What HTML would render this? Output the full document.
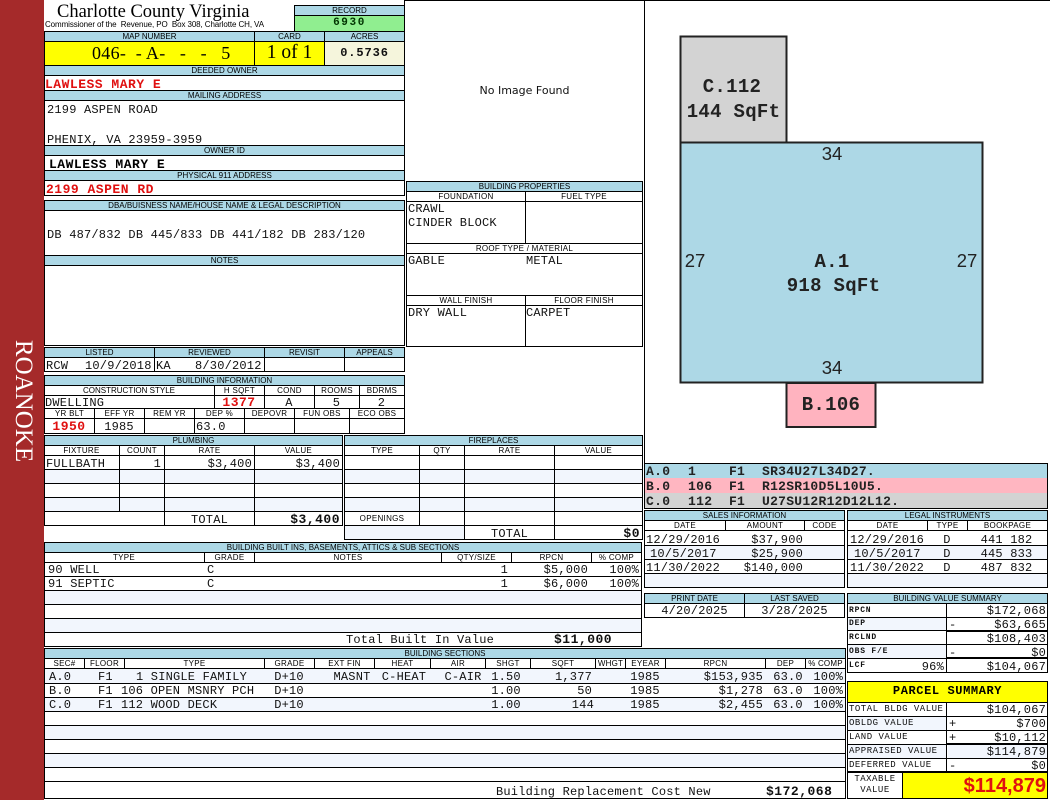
<!DOCTYPE html>
<html><head><meta charset="utf-8"><style>
html,body{margin:0;padding:0;background:#fff}
#p{position:relative;width:1050px;height:800px;overflow:hidden;background:#fff;font-family:"Liberation Mono",monospace;font-size:12px;color:#111}
#p div{position:absolute;box-sizing:border-box;white-space:pre}
.h{background:#add8e6;border:1px solid #000;height:11px;font:8px/9px "Liberation Sans",sans-serif;letter-spacing:0;text-align:center;color:#000}
.l{border:1px solid #000;height:11px;background:#fff;font:8px/11px "Liberation Sans",sans-serif;letter-spacing:.3px;text-align:center;color:#000}
.f{border:1px solid #000;background:#fff}
.s{background:#f2f6fd}
.hl{height:1px;background:#000}
.vl{width:1px;background:#000}
.m{height:14px;line-height:16px;letter-spacing:.2px}
.r{text-align:right}
.c{text-align:center}
.b{font-weight:bold;font-size:13px;letter-spacing:.5px}
.red{color:#e01010}
.t{font-size:9px;letter-spacing:.5px;height:14px;line-height:14px;color:#111}
</style></head><body><div id="p">

<div style="left:0;top:0;width:44px;height:800px;background:#a52a2a"></div>
<div style="left:-39px;top:388px;width:124px;height:26px;line-height:26px;transform:rotate(90deg);color:#fff;font:25px/26px 'Liberation Serif',serif;text-align:center">ROANOKE</div>

<!-- header -->
<div style="left:57px;top:2px;font:18.5px/20px 'Liberation Serif',serif;color:#000">Charlotte County Virginia</div>
<div style="left:45px;top:20px;font:8px/10px 'Liberation Sans',sans-serif;letter-spacing:-.1px;color:#000">Commissioner of the  Revenue, PO  Box 308, Charlotte CH, VA</div>
<div class="h" style="left:294px;top:5px;width:111px">RECORD</div>
<div class="f" style="left:294px;top:15px;width:111px;height:17px;background:#90ee90;font-weight:bold;font-size:11px;letter-spacing:1.6px;line-height:15px;text-align:center;color:#030">6930</div>

<div class="h" style="left:44px;top:31px;width:211px">MAP NUMBER</div>
<div class="h" style="left:254px;top:31px;width:71px">CARD</div>
<div class="h" style="left:324px;top:31px;width:81px">ACRES</div>
<div class="f" style="left:44px;top:41px;width:211px;height:25px;background:#ff0;font:18px/22px 'Liberation Serif',serif;letter-spacing:.3px;color:#000;padding-left:47px">046-  - A-   -   -   5</div>
<div class="f" style="left:254px;top:41px;width:71px;height:25px;background:#ff0;font:19.5px/22px 'Liberation Serif',serif;color:#000;text-align:center">1 of 1</div>
<div class="f" style="left:324px;top:41px;width:81px;height:25px;background:#f5f5dc;font-weight:bold;font-size:12px;letter-spacing:.9px;line-height:22px;text-align:center;color:#111">0.5736</div>

<div class="h" style="left:44px;top:65px;width:361px">DEEDED OWNER</div>
<div class="f" style="left:44px;top:75px;width:361px;height:16px"></div>
<div class="m b red" style="left:45px;top:77px">LAWLESS MARY E</div>
<div class="h" style="left:44px;top:90px;width:361px">MAILING ADDRESS</div>
<div class="f" style="left:44px;top:100px;width:361px;height:46px"></div>
<div class="m" style="left:47px;top:102px">2199 ASPEN ROAD</div>
<div class="m" style="left:47px;top:132px">PHENIX, VA 23959-3959</div>
<div class="h" style="left:44px;top:145px;width:361px">OWNER ID</div>
<div class="f" style="left:44px;top:155px;width:361px;height:16px"></div>
<div class="m b" style="left:49px;top:157px;color:#000">LAWLESS MARY E</div>
<div class="h" style="left:44px;top:170px;width:361px">PHYSICAL 911 ADDRESS</div>
<div class="f" style="left:44px;top:180px;width:361px;height:16px"></div>
<div class="m b red" style="left:46px;top:182px">2199 ASPEN RD</div>

<div class="h" style="left:44px;top:200px;width:361px">DBA/BUISNESS NAME/HOUSE NAME &amp; LEGAL DESCRIPTION</div>
<div class="f" style="left:44px;top:210px;width:361px;height:46px"></div>
<div class="m" style="left:47px;top:227px">DB 487/832 DB 445/833 DB 441/182 DB 283/120</div>
<div class="h" style="left:44px;top:255px;width:361px">NOTES</div>
<div class="f" style="left:44px;top:265px;width:361px;height:81px"></div>

<!-- listed -->
<div class="h" style="left:44px;top:347px;width:111px">LISTED</div>
<div class="h" style="left:154px;top:347px;width:111px">REVIEWED</div>
<div class="h" style="left:264px;top:347px;width:81px">REVISIT</div>
<div class="h" style="left:344px;top:347px;width:61px">APPEALS</div>
<div class="f" style="left:44px;top:357px;width:111px;height:15px"></div>
<div class="f" style="left:154px;top:357px;width:111px;height:15px"></div>
<div class="f" style="left:264px;top:357px;width:81px;height:15px"></div>
<div class="f" style="left:344px;top:357px;width:61px;height:15px"></div>
<div class="m" style="left:46px;top:358px">RCW</div>
<div class="m" style="left:85px;top:358px">10/9/2018</div>
<div class="m" style="left:156px;top:358px">KA</div>
<div class="m" style="left:195px;top:358px">8/30/2012</div>

<!-- building info -->
<div class="h" style="left:44px;top:375px;width:361px">BUILDING INFORMATION</div>
<div class="f" style="left:44px;top:385px;width:361px;height:49px"></div>
<div class="hl" style="left:44px;top:395px;width:361px"></div>
<div class="hl" style="left:44px;top:408px;width:361px"></div>
<div class="hl" style="left:44px;top:418px;width:361px"></div>
<div class="vl" style="left:214px;top:385px;height:23px"></div>
<div class="vl" style="left:264px;top:385px;height:23px"></div>
<div class="vl" style="left:314px;top:385px;height:23px"></div>
<div class="vl" style="left:359px;top:385px;height:23px"></div>
<div class="vl" style="left:94px;top:408px;height:26px"></div>
<div class="vl" style="left:144px;top:408px;height:26px"></div>
<div class="vl" style="left:194px;top:408px;height:26px"></div>
<div class="vl" style="left:244px;top:408px;height:26px"></div>
<div class="vl" style="left:294px;top:408px;height:26px"></div>
<div class="vl" style="left:349px;top:408px;height:26px"></div>
<div class="l" style="left:44px;top:385px;width:170px;border:0;letter-spacing:0;background:none">CONSTRUCTION STYLE</div>
<div class="l" style="left:215px;top:385px;width:49px;border:0;background:none">H SQFT</div>
<div class="l" style="left:265px;top:385px;width:49px;border:0;background:none">COND</div>
<div class="l" style="left:315px;top:385px;width:44px;border:0;background:none">ROOMS</div>
<div class="l" style="left:360px;top:385px;width:44px;border:0;background:none">BDRMS</div>
<div class="l" style="left:45px;top:408px;width:49px;border:0;background:none">YR BLT</div>
<div class="l" style="left:95px;top:408px;width:49px;border:0;background:none">EFF YR</div>
<div class="l" style="left:145px;top:408px;width:49px;border:0;background:none">REM YR</div>
<div class="l" style="left:195px;top:408px;width:49px;border:0;background:none">DEP %</div>
<div class="l" style="left:245px;top:408px;width:49px;border:0;background:none">DEPOVR</div>
<div class="l" style="left:295px;top:408px;width:54px;border:0;background:none">FUN OBS</div>
<div class="l" style="left:350px;top:408px;width:54px;border:0;background:none">ECO OBS</div>
<div class="m" style="left:45px;top:395px">DWELLING</div>
<div class="m b red c" style="left:214px;top:395px;width:50px">1377</div>
<div class="m c" style="left:264px;top:395px;width:50px">A</div>
<div class="m c" style="left:314px;top:395px;width:45px">5</div>
<div class="m c" style="left:359px;top:395px;width:45px">2</div>
<div class="m b red c" style="left:44px;top:419px;width:50px">1950</div>
<div class="m c" style="left:94px;top:419px;width:50px">1985</div>
<div class="m" style="left:196px;top:419px">63.0</div>

<!-- plumbing -->
<div class="h" style="left:44px;top:435px;width:299px">PLUMBING</div>
<div class="f" style="left:44px;top:445px;width:299px;height:81px"></div>
<div class="s" style="left:45px;top:470px;width:297px;height:13px"></div>
<div class="s" style="left:45px;top:498px;width:297px;height:13px"></div>
<div class="hl" style="left:44px;top:455px;width:299px"></div>
<div class="hl" style="left:44px;top:469px;width:299px"></div>
<div class="hl" style="left:44px;top:483px;width:299px"></div>
<div class="hl" style="left:44px;top:497px;width:299px"></div>
<div class="hl" style="left:44px;top:511px;width:299px"></div>
<div class="vl" style="left:119px;top:445px;height:66px"></div>
<div class="vl" style="left:164px;top:445px;height:81px"></div>
<div class="vl" style="left:254px;top:445px;height:81px"></div>
<div class="l" style="left:44px;top:445px;width:75px;border:0;background:none">FIXTURE</div>
<div class="l" style="left:120px;top:445px;width:44px;border:0;background:none">COUNT</div>
<div class="l" style="left:165px;top:445px;width:89px;border:0;background:none">RATE</div>
<div class="l" style="left:255px;top:445px;width:87px;border:0;background:none">VALUE</div>
<div class="m" style="left:46px;top:456px">FULLBATH</div>
<div class="m r" style="left:120px;top:456px;width:41px">1</div>
<div class="m r" style="left:165px;top:456px;width:87px">$3,400</div>
<div class="m r" style="left:255px;top:456px;width:85px">$3,400</div>
<div class="m c" style="left:165px;top:512px;width:89px">TOTAL</div>
<div class="m b r" style="left:255px;top:512px;width:85px">$3,400</div>

<!-- fireplaces -->
<div class="h" style="left:344px;top:435px;width:299px">FIREPLACES</div>
<div class="f" style="left:344px;top:445px;width:299px;height:95px"></div>
<div class="s" style="left:345px;top:470px;width:297px;height:13px"></div>
<div class="s" style="left:345px;top:498px;width:297px;height:13px"></div>
<div class="s" style="left:345px;top:526px;width:119px;height:13px"></div>
<div class="hl" style="left:344px;top:455px;width:299px"></div>
<div class="hl" style="left:344px;top:469px;width:299px"></div>
<div class="hl" style="left:344px;top:483px;width:299px"></div>
<div class="hl" style="left:344px;top:497px;width:299px"></div>
<div class="hl" style="left:344px;top:511px;width:299px"></div>
<div class="hl" style="left:344px;top:525px;width:299px"></div>
<div class="vl" style="left:419px;top:445px;height:80px"></div>
<div class="vl" style="left:464px;top:445px;height:95px"></div>
<div class="vl" style="left:554px;top:445px;height:95px"></div>
<div class="l" style="left:345px;top:445px;width:74px;border:0;background:none">TYPE</div>
<div class="l" style="left:420px;top:445px;width:44px;border:0;background:none">QTY</div>
<div class="l" style="left:465px;top:445px;width:89px;border:0;background:none">RATE</div>
<div class="l" style="left:555px;top:445px;width:87px;border:0;background:none">VALUE</div>
<div class="l" style="left:345px;top:513px;width:74px;border:0;background:none">OPENINGS</div>
<div class="m c" style="left:465px;top:526px;width:89px">TOTAL</div>
<div class="m b r" style="left:555px;top:526px;width:85px">$0</div>

<!-- built ins -->
<div class="h" style="left:44px;top:542px;width:598px">BUILDING BUILT INS, BASEMENTS, ATTICS &amp; SUB SECTIONS</div>
<div class="f" style="left:44px;top:552px;width:598px;height:95px"></div>
<div class="s" style="left:45px;top:591px;width:596px;height:13px"></div>
<div class="s" style="left:45px;top:619px;width:596px;height:13px"></div>
<div class="hl" style="left:44px;top:562px;width:598px"></div>
<div class="hl" style="left:44px;top:576px;width:598px"></div>
<div class="hl" style="left:44px;top:590px;width:598px"></div>
<div class="hl" style="left:44px;top:604px;width:598px"></div>
<div class="hl" style="left:44px;top:618px;width:598px"></div>
<div class="hl" style="left:44px;top:632px;width:598px"></div>
<div class="vl" style="left:204px;top:552px;height:10px"></div>
<div class="vl" style="left:254px;top:552px;height:10px"></div>
<div class="vl" style="left:441px;top:552px;height:10px"></div>
<div class="vl" style="left:511px;top:552px;height:10px"></div>
<div class="vl" style="left:591px;top:552px;height:10px"></div>
<div class="l" style="left:44px;top:552px;width:160px;border:0;background:none">TYPE</div>
<div class="l" style="left:205px;top:552px;width:49px;border:0;background:none">GRADE</div>
<div class="l" style="left:255px;top:552px;width:186px;border:0;background:none">NOTES</div>
<div class="l" style="left:442px;top:552px;width:69px;border:0;background:none">QTY/SIZE</div>
<div class="l" style="left:512px;top:552px;width:79px;border:0;background:none">RPCN</div>
<div class="l" style="left:592px;top:552px;width:49px;border:0;background:none">% COMP</div>
<div class="m" style="left:48px;top:562px">90 WELL</div>
<div class="m" style="left:207px;top:562px">C</div>
<div class="m r" style="left:442px;top:562px;width:66px">1</div>
<div class="m r" style="left:512px;top:562px;width:76px">$5,000</div>
<div class="m r" style="left:592px;top:562px;width:47px">100%</div>
<div class="m" style="left:48px;top:576px">91 SEPTIC</div>
<div class="m" style="left:207px;top:576px">C</div>
<div class="m r" style="left:442px;top:576px;width:66px">1</div>
<div class="m r" style="left:512px;top:576px;width:76px">$6,000</div>
<div class="m r" style="left:592px;top:576px;width:47px">100%</div>
<div class="m" style="left:346px;top:632px">Total Built In Value</div>
<div class="m b" style="left:554px;top:632px">$11,000</div>

<!-- building sections -->
<div class="h" style="left:44px;top:648px;width:802px">BUILDING SECTIONS</div>
<div class="f" style="left:44px;top:658px;width:802px;height:141px"></div>
<div class="s" style="left:45px;top:669px;width:800px;height:14px"></div>
<div class="s" style="left:45px;top:698px;width:800px;height:13px"></div>
<div class="s" style="left:45px;top:726px;width:800px;height:13px"></div>
<div class="s" style="left:45px;top:754px;width:800px;height:13px"></div>
<div class="hl" style="left:44px;top:668px;width:802px"></div>
<div class="hl" style="left:44px;top:683px;width:802px"></div>
<div class="hl" style="left:44px;top:697px;width:802px"></div>
<div class="hl" style="left:44px;top:711px;width:802px"></div>
<div class="hl" style="left:44px;top:725px;width:802px"></div>
<div class="hl" style="left:44px;top:739px;width:802px"></div>
<div class="hl" style="left:44px;top:753px;width:802px"></div>
<div class="hl" style="left:44px;top:767px;width:802px"></div>
<div class="hl" style="left:44px;top:781px;width:802px"></div>
<div class="vl" style="left:84px;top:658px;height:10px"></div>
<div class="vl" style="left:124px;top:658px;height:10px"></div>
<div class="vl" style="left:264px;top:658px;height:10px"></div>
<div class="vl" style="left:314px;top:658px;height:10px"></div>
<div class="vl" style="left:374px;top:658px;height:10px"></div>
<div class="vl" style="left:430px;top:658px;height:10px"></div>
<div class="vl" style="left:485px;top:658px;height:10px"></div>
<div class="vl" style="left:530px;top:658px;height:10px"></div>
<div class="vl" style="left:595px;top:658px;height:10px"></div>
<div class="vl" style="left:625px;top:658px;height:10px"></div>
<div class="vl" style="left:665px;top:658px;height:10px"></div>
<div class="vl" style="left:765px;top:658px;height:10px"></div>
<div class="vl" style="left:805px;top:658px;height:10px"></div>
<div class="l" style="left:45px;top:658px;width:39px;border:0;background:none">SEC#</div>
<div class="l" style="left:85px;top:658px;width:39px;border:0;background:none">FLOOR</div>
<div class="l" style="left:125px;top:658px;width:139px;border:0;background:none">TYPE</div>
<div class="l" style="left:265px;top:658px;width:49px;border:0;background:none">GRADE</div>
<div class="l" style="left:315px;top:658px;width:59px;border:0;background:none">EXT FIN</div>
<div class="l" style="left:375px;top:658px;width:55px;border:0;background:none">HEAT</div>
<div class="l" style="left:431px;top:658px;width:54px;border:0;background:none">AIR</div>
<div class="l" style="left:486px;top:658px;width:44px;border:0;background:none">SHGT</div>
<div class="l" style="left:531px;top:658px;width:64px;border:0;background:none">SQFT</div>
<div class="l" style="left:596px;top:658px;width:29px;border:0;background:none;letter-spacing:.2px">WHGT</div>
<div class="l" style="left:626px;top:658px;width:39px;border:0;background:none">EYEAR</div>
<div class="l" style="left:666px;top:658px;width:99px;border:0;background:none">RPCN</div>
<div class="l" style="left:766px;top:658px;width:39px;border:0;background:none">DEP</div>
<div class="l" style="left:806px;top:658px;width:39px;border:0;background:none;letter-spacing:.2px">% COMP</div>

<div class="m" style="left:49px;top:669px">A.0</div><div class="m" style="left:98px;top:669px">F1</div><div class="m" style="left:136px;top:669px">1 SINGLE FAMILY</div><div class="m c" style="left:264px;top:669px;width:50px">D+10</div><div class="m c" style="left:322px;top:669px;width:60px">MASNT</div><div class="m c" style="left:374px;top:669px;width:60px">C-HEAT</div><div class="m c" style="left:433px;top:669px;width:60px">C-AIR</div><div class="m c" style="left:486px;top:669px;width:40px">1.50</div><div class="m r" style="left:531px;top:669px;width:61px">1,377</div><div class="m c" style="left:625px;top:669px;width:40px">1985</div><div class="m r" style="left:666px;top:669px;width:97px">$153,935</div><div class="m c" style="left:768px;top:669px;width:40px">63.0</div><div class="m r" style="left:806px;top:669px;width:37px">100%</div>
<div class="m" style="left:49px;top:683px">B.0</div><div class="m" style="left:98px;top:683px">F1</div><div class="m" style="left:121px;top:683px">106 OPEN MSNRY PCH</div><div class="m c" style="left:264px;top:683px;width:50px">D+10</div><div class="m c" style="left:486px;top:683px;width:40px">1.00</div><div class="m r" style="left:531px;top:683px;width:61px">50</div><div class="m c" style="left:625px;top:683px;width:40px">1985</div><div class="m r" style="left:666px;top:683px;width:97px">$1,278</div><div class="m c" style="left:768px;top:683px;width:40px">63.0</div><div class="m r" style="left:806px;top:683px;width:37px">100%</div>
<div class="m" style="left:49px;top:697px">C.0</div><div class="m" style="left:98px;top:697px">F1</div><div class="m" style="left:121px;top:697px">112 WOOD DECK</div><div class="m c" style="left:264px;top:697px;width:50px">D+10</div><div class="m c" style="left:486px;top:697px;width:40px">1.00</div><div class="m r" style="left:531px;top:697px;width:63px">144</div><div class="m c" style="left:625px;top:697px;width:40px">1985</div><div class="m r" style="left:666px;top:697px;width:97px">$2,455</div><div class="m c" style="left:768px;top:697px;width:40px">63.0</div><div class="m r" style="left:806px;top:697px;width:37px">100%</div>
<div class="m" style="left:496px;top:784px">Building Replacement Cost New</div>
<div class="m b" style="left:766px;top:784px">$172,068</div>

<!-- image box -->
<div class="vl" style="left:404px;top:0;height:180px"></div>
<div class="vl" style="left:644px;top:0;height:463px"></div>
<div class="hl" style="left:404px;top:0;width:646px"></div>
<div style="left:405px;top:83px;width:239px;text-align:center;font:11px/15px 'DejaVu Sans',sans-serif;color:#111">No Image Found</div>

<!-- building properties -->
<div class="h" style="left:406px;top:181px;width:237px">BUILDING PROPERTIES</div>
<div class="f" style="left:406px;top:191px;width:237px;height:156px"></div>
<div class="hl" style="left:406px;top:201px;width:237px"></div>
<div class="hl" style="left:406px;top:243px;width:237px"></div>
<div class="hl" style="left:406px;top:253px;width:237px"></div>
<div class="hl" style="left:406px;top:295px;width:237px"></div>
<div class="hl" style="left:406px;top:305px;width:237px"></div>
<div class="vl" style="left:525px;top:191px;height:52px"></div>
<div class="vl" style="left:525px;top:295px;height:52px"></div>
<div class="l" style="left:407px;top:191px;width:118px;border:0;background:none">FOUNDATION</div>
<div class="l" style="left:526px;top:191px;width:116px;border:0;background:none">FUEL TYPE</div>
<div class="l" style="left:407px;top:243px;width:235px;border:0;background:none;letter-spacing:.25px">ROOF TYPE / MATERIAL</div>
<div class="l" style="left:407px;top:295px;width:118px;border:0;background:none">WALL FINISH</div>
<div class="l" style="left:526px;top:295px;width:116px;border:0;background:none">FLOOR FINISH</div>
<div class="m" style="left:408px;top:201px">CRAWL</div>
<div class="m" style="left:408px;top:215px">CINDER BLOCK</div>
<div class="m" style="left:408px;top:253px">GABLE</div>
<div class="m" style="left:526px;top:253px">METAL</div>
<div class="m" style="left:408px;top:305px">DRY WALL</div>
<div class="m" style="left:526px;top:305px">CARPET</div>

<!-- sketch -->
<svg style="position:absolute;left:645px;top:1px" width="405" height="462" viewBox="645 1 405 462">
<polygon points="680.5,36.5 786.5,36.5 786.5,142.5 680.5,142.5" fill="#d3d3d3" stroke="#222" stroke-width="2"/>
<polygon points="786.5,383 875.5,383 875.5,427 786.5,427" fill="#ffb3bf" stroke="#222" stroke-width="2"/>
<polygon points="680.5,142.5 982.5,142.5 982.5,382.5 680.5,382.5" fill="#add8e6" stroke="#222" stroke-width="2"/>
<g font-family="Liberation Mono, monospace" font-weight="bold" font-size="19" letter-spacing=".3" fill="#222" text-anchor="middle">
<text x="732" y="92">C.112</text>
<text x="733.5" y="117">144 SqFt</text>
<text x="832" y="267">A.1</text>
<text x="833.5" y="291">918 SqFt</text>
<text x="831" y="410">B.106</text>
</g>
<g font-family="Liberation Sans, sans-serif" font-size="18.5" fill="#222" text-anchor="middle">
<text x="832" y="160">34</text>
<text x="832" y="374">34</text>
<text x="695" y="267">27</text>
<text x="967" y="267">27</text>
</g>
</svg>

<!-- sketch legend -->
<div class="f" style="left:644px;top:463px;width:404px;height:46px;background:#d3d3d3"></div>
<div style="left:645px;top:464px;width:402px;height:14px;background:#add8e6"></div>
<div style="left:645px;top:478px;width:402px;height:15px;background:#ffb6c1"></div>
<div class="m" style="left:646px;top:464px;font-weight:bold;letter-spacing:.3px;font-size:13px;color:#222">A.0</div><div class="m" style="left:688px;top:464px;font-weight:bold;font-size:13px;color:#222">1</div><div class="m" style="left:729px;top:464px;font-weight:bold;font-size:13px;color:#222">F1</div><div class="m" style="left:762px;top:464px;font-weight:bold;letter-spacing:.27px;font-size:13px;color:#222">SR34U27L34D27.</div>
<div class="m" style="left:646px;top:479px;font-weight:bold;letter-spacing:.3px;font-size:13px;color:#222">B.0</div><div class="m" style="left:688px;top:479px;font-weight:bold;letter-spacing:.3px;font-size:13px;color:#222">106</div><div class="m" style="left:729px;top:479px;font-weight:bold;font-size:13px;color:#222">F1</div><div class="m" style="left:762px;top:479px;font-weight:bold;letter-spacing:.27px;font-size:13px;color:#222">R12SR10D5L10U5.</div>
<div class="m" style="left:646px;top:494px;font-weight:bold;letter-spacing:.3px;font-size:13px;color:#222">C.0</div><div class="m" style="left:688px;top:494px;font-weight:bold;letter-spacing:.3px;font-size:13px;color:#222">112</div><div class="m" style="left:729px;top:494px;font-weight:bold;font-size:13px;color:#222">F1</div><div class="m" style="left:762px;top:494px;font-weight:bold;letter-spacing:.27px;font-size:13px;color:#222">U27SU12R12D12L12.</div>

<!-- sales -->
<div class="h" style="left:644px;top:510px;width:201px">SALES INFORMATION</div>
<div class="f" style="left:644px;top:520px;width:201px;height:68px"></div>
<div class="s" style="left:645px;top:546px;width:199px;height:13px"></div>
<div class="s" style="left:645px;top:574px;width:199px;height:13px"></div>
<div class="hl" style="left:644px;top:530px;width:201px"></div>
<div class="hl" style="left:644px;top:545px;width:201px"></div>
<div class="hl" style="left:644px;top:559px;width:201px"></div>
<div class="hl" style="left:644px;top:573px;width:201px"></div>
<div class="vl" style="left:725px;top:520px;height:10px"></div>
<div class="vl" style="left:804px;top:520px;height:10px"></div>
<div class="l" style="left:645px;top:520px;width:80px;border:0;background:none">DATE</div>
<div class="l" style="left:726px;top:520px;width:78px;border:0;background:none">AMOUNT</div>
<div class="l" style="left:805px;top:520px;width:39px;border:0;background:none">CODE</div>
<div class="m" style="left:646px;top:532px">12/29/2016</div><div class="m r" style="left:726px;top:532px;width:77px">$37,900</div>
<div class="m" style="left:650px;top:546px">10/5/2017</div><div class="m r" style="left:726px;top:546px;width:77px">$25,900</div>
<div class="m" style="left:646px;top:560px">11/30/2022</div><div class="m r" style="left:726px;top:560px;width:77px">$140,000</div>

<!-- legal -->
<div class="h" style="left:847px;top:510px;width:201px">LEGAL INSTRUMENTS</div>
<div class="f" style="left:847px;top:520px;width:201px;height:68px"></div>
<div class="s" style="left:848px;top:546px;width:199px;height:13px"></div>
<div class="s" style="left:848px;top:574px;width:199px;height:13px"></div>
<div class="hl" style="left:847px;top:530px;width:201px"></div>
<div class="hl" style="left:847px;top:545px;width:201px"></div>
<div class="hl" style="left:847px;top:559px;width:201px"></div>
<div class="hl" style="left:847px;top:573px;width:201px"></div>
<div class="vl" style="left:927px;top:520px;height:10px"></div>
<div class="vl" style="left:967px;top:520px;height:10px"></div>
<div class="l" style="left:848px;top:520px;width:79px;border:0;background:none">DATE</div>
<div class="l" style="left:928px;top:520px;width:39px;border:0;background:none">TYPE</div>
<div class="l" style="left:968px;top:520px;width:79px;border:0;background:none">BOOKPAGE</div>
<div class="m" style="left:850px;top:532px">12/29/2016</div><div class="m c" style="left:927px;top:532px;width:40px">D</div><div class="m c" style="left:967px;top:532px;width:79px">441 182</div>
<div class="m" style="left:854px;top:546px">10/5/2017</div><div class="m c" style="left:927px;top:546px;width:40px">D</div><div class="m c" style="left:967px;top:546px;width:79px">445 833</div>
<div class="m" style="left:850px;top:560px">11/30/2022</div><div class="m c" style="left:927px;top:560px;width:40px">D</div><div class="m c" style="left:967px;top:560px;width:79px">487 832</div>

<!-- print date -->
<div class="h" style="left:644px;top:593px;width:101px">PRINT DATE</div>
<div class="h" style="left:744px;top:593px;width:101px">LAST SAVED</div>
<div class="f" style="left:644px;top:603px;width:101px;height:15px"></div>
<div class="f" style="left:744px;top:603px;width:101px;height:15px"></div>
<div class="m c" style="left:644px;top:603px;width:101px">4/20/2025</div>
<div class="m c" style="left:744px;top:603px;width:101px">3/28/2025</div>

<!-- value summary -->
<div class="h" style="left:847px;top:593px;width:201px">BUILDING VALUE SUMMARY</div>
<div class="f" style="left:847px;top:603px;width:201px;height:70px"></div>
<div class="s" style="left:848px;top:618px;width:98px;height:13px"></div>
<div class="s" style="left:848px;top:645px;width:98px;height:13px"></div>
<div class="hl" style="left:847px;top:617px;width:201px"></div>
<div class="hl" style="left:847px;top:630px;width:100px"></div>
<div class="hl" style="left:847px;top:644px;width:201px"></div>
<div class="hl" style="left:847px;top:658px;width:100px"></div>
<div style="left:947px;top:630px;width:101px;height:2px;background:#000"></div>
<div style="left:947px;top:657px;width:101px;height:2px;background:#000"></div>
<div class="vl" style="left:946px;top:603px;height:70px"></div>
<div class="t" style="left:849px;top:604px;font-weight:bold;font-size:8px;letter-spacing:.8px">RPCN</div>
<div class="t" style="left:849px;top:617px;font-weight:bold;font-size:8px;letter-spacing:.8px">DEP</div>
<div class="t" style="left:849px;top:631px;font-weight:bold;font-size:8px;letter-spacing:.8px">RCLND</div>
<div class="t" style="left:849px;top:645px;font-weight:bold;font-size:8px;letter-spacing:.8px">OBS F/E</div>
<div class="t" style="left:849px;top:659px;font-weight:bold;font-size:8px;letter-spacing:.8px">LCF</div>
<div class="m r" style="left:900px;top:659px;width:44px">96%</div>
<div class="m r" style="left:948px;top:603px;width:98px">$172,068</div>
<div class="m" style="left:949px;top:617px">-</div><div class="m r" style="left:948px;top:617px;width:98px">$63,665</div>
<div class="m r" style="left:948px;top:631px;width:98px">$108,403</div>
<div class="m" style="left:949px;top:645px">-</div><div class="m r" style="left:948px;top:645px;width:98px">$0</div>
<div class="m r" style="left:948px;top:659px;width:98px">$104,067</div>

<!-- parcel summary -->
<div class="f" style="left:847px;top:681px;width:201px;height:22px;background:#ff0;font-weight:bold;font-size:12px;line-height:19px;letter-spacing:.6px;text-align:center;color:#000">PARCEL SUMMARY</div>
<div class="f" style="left:847px;top:702px;width:201px;height:97px"></div>
<div class="s" style="left:848px;top:717px;width:98px;height:13px"></div>
<div class="s" style="left:848px;top:745px;width:98px;height:13px"></div>
<div class="s" style="left:948px;top:745px;width:99px;height:13px"></div>
<div class="hl" style="left:847px;top:716px;width:201px"></div>
<div class="hl" style="left:847px;top:730px;width:201px"></div>
<div class="hl" style="left:847px;top:744px;width:100px"></div>
<div style="left:947px;top:743px;width:101px;height:2px;background:#000"></div>
<div class="hl" style="left:847px;top:758px;width:201px"></div>
<div style="left:847px;top:771px;width:201px;height:2px;background:#000"></div>
<div class="vl" style="left:946px;top:702px;height:70px"></div>
<div style="left:903px;top:773px;width:144px;height:25px;background:#ff0"></div>
<div class="vl" style="left:902px;top:772px;height:27px"></div>
<div class="t" style="left:849px;top:702px">TOTAL BLDG VALUE</div>
<div class="t" style="left:849px;top:716px">OBLDG VALUE</div>
<div class="t" style="left:849px;top:730px">LAND VALUE</div>
<div class="t" style="left:849px;top:744px">APPRAISED VALUE</div>
<div class="t" style="left:849px;top:758px">DEFERRED VALUE</div>
<div class="m r" style="left:948px;top:702px;width:98px">$104,067</div>
<div class="m" style="left:949px;top:716px">+</div><div class="m r" style="left:948px;top:716px;width:98px">$700</div>
<div class="m" style="left:949px;top:730px">+</div><div class="m r" style="left:948px;top:730px;width:98px">$10,112</div>
<div class="m r" style="left:948px;top:744px;width:98px">$114,879</div>
<div class="m" style="left:949px;top:758px">-</div><div class="m r" style="left:948px;top:758px;width:98px">$0</div>
<div class="t c" style="left:848px;top:772px;width:54px;height:12px;line-height:14px">TAXABLE</div>
<div class="t c" style="left:848px;top:783px;width:54px;height:12px;line-height:14px">VALUE</div>
<div class="r" style="left:903px;top:774px;width:143px;height:24px;font:bold 20px/24px 'Liberation Sans',sans-serif;color:#e01010">$114,879</div>

</div></body></html>
